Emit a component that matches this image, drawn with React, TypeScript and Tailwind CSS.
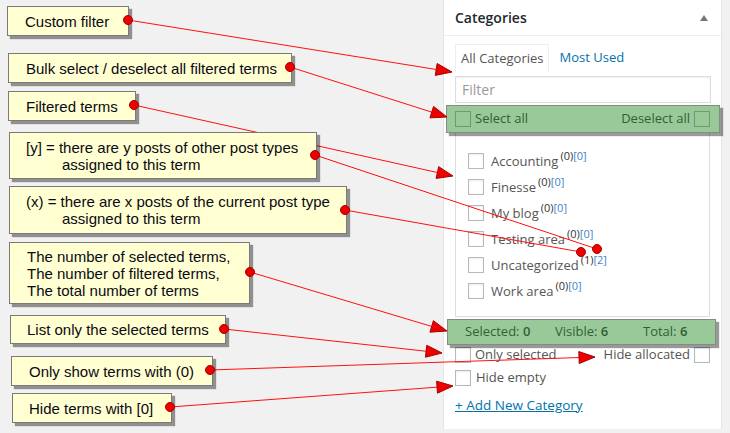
import React from 'react'

type Note = { mt: number; ml: number; w: number; h: number; pl: number; lines: string[]; indent?: boolean }

const notes: Note[] = [
  { mt: 6, ml: 7, w: 122, h: 30, pl: 17, lines: ['Custom filter'] },
  { mt: 17, ml: 8, w: 284, h: 30, pl: 17, lines: ['Bulk select / deselect all filtered terms'] },
  { mt: 8, ml: 8, w: 128, h: 30, pl: 17, lines: ['Filtered terms'] },
  { mt: 11, ml: 9, w: 308, h: 47, pl: 16, lines: ['[y] = there are y posts of other post types', 'assigned to this term'], indent: true },
  { mt: 7, ml: 9, w: 338, h: 48, pl: 16, lines: ['(x) = there are x posts of the current post type', 'assigned to this term'], indent: true },
  { mt: 8, ml: 9, w: 241, h: 62, pl: 17, lines: ['The number of selected terms,', 'The number of filtered terms,', 'The total number of terms'] },
  { mt: 11, ml: 10, w: 216, h: 29, pl: 16, lines: ['List only the selected terms'] },
  { mt: 12, ml: 11, w: 202, h: 30, pl: 17, lines: ['Only show terms with (0)'] },
  { mt: 7, ml: 12, w: 160, h: 30, pl: 16, lines: ['Hide terms with [0]'] },
]

const arrows = [
  { from: [128, 20], to: [452, 72], head: true },
  { from: [290, 67], to: [447, 117], head: true },
  { from: [134, 105], to: [453, 176], head: true },
  { from: [315, 155], to: [597, 249], head: false },
  { from: [345, 210], to: [581, 252], head: false },
  { from: [250, 272], to: [447, 331], head: true },
  { from: [224, 329], to: [442, 353], head: true },
  { from: [210, 370], to: [595, 357], head: true },
  { from: [170, 407], to: [453, 386], head: true },
]

const terms = [
  { name: 'Accounting', x: 0, y: 0 },
  { name: 'Finesse', x: 0, y: 0 },
  { name: 'My blog', x: 0, y: 0 },
  { name: 'Testing area', x: 0, y: 0 },
  { name: 'Uncategorized', x: 1, y: 2 },
  { name: 'Work area', x: 0, y: 0 },
]

function geom(a: (typeof arrows)[number]) {
  const [x1, y1] = a.from
  const [x2, y2] = a.to
  const len = Math.hypot(x2 - x1, y2 - y1)
  const ux = (x2 - x1) / len
  const uy = (y2 - y1) / len
  const bx = x2 - ux * 16
  const by = y2 - uy * 16
  return {
    end: a.head ? [bx, by] : [x2, y2],
    poly: `${x2},${y2} ${bx - uy * 6},${by + ux * 6} ${bx + uy * 6},${by - ux * 6}`,
  }
}

const Box = () => <span className="inline-block h-4 w-4 shrink-0 border border-[#b4b9be] bg-white shadow-[inset_0_1px_2px_rgba(0,0,0,0.08)]" />
const GreenBox = () => <span className="inline-block h-4 w-4 shrink-0 border border-[#6f9a6f]" />

export default function App() {
  return (
    <div className="relative flex h-[433px] w-[730px] overflow-hidden bg-[#f1f1f1]">
      {/* annotation boxes */}
      <div className="relative z-20 flex w-[443px] flex-col items-start font-['Liberation_Sans',Arial,sans-serif] text-[15px] text-[#0a0a14]">
        {notes.map((n, i) => (
          <div
            key={i}
            style={{ marginTop: n.mt, marginLeft: n.ml, width: n.w, height: n.h, paddingLeft: n.pl }}
            className="flex flex-col justify-center whitespace-nowrap border border-[#7a7a7a] bg-[#ffffd2] leading-[17px] shadow-[3px_3px_1px_rgba(0,0,0,0.4)]"
          >
            {n.lines.map((l, j) => (
              <span key={j} className={n.indent && j > 0 ? 'pl-[36px]' : ''}>
                {l}
              </span>
            ))}
          </div>
        ))}
      </div>

      {/* categories panel */}
      <div className="flex h-[429px] w-[279px] flex-col border-x border-[#e5e5e5] bg-white font-['Open_Sans',sans-serif] text-[13px] text-[#555]">
        <div className="flex h-[36px] shrink-0 items-center justify-between border-b border-[#eee] pl-[11px] pr-[12px]">
          <span className="text-[14px] font-semibold text-[#23282d]">Categories</span>
          <svg width="10" height="8" viewBox="0 0 10 8">
            <polygon points="5,1 9,7 1,7" fill="#72777c" />
          </svg>
        </div>

        <div className="flex flex-col pl-[11px]">
          <div className="mt-[8px] flex h-[28px] items-stretch">
            <span className="flex items-center border border-b-0 border-[#eee] px-[5px] text-[#555]">All Categories</span>
            <span className="ml-[10px] flex items-center text-[#0073aa]">Most Used</span>
          </div>

          <input
            placeholder="Filter"
            className="mt-[4px] h-[27px] w-[256px] border border-[#ddd] px-[6px] text-[14px] text-[#555] outline-none shadow-[inset_0_1px_2px_rgba(0,0,0,0.07)] placeholder:text-[#999]"
          />

          <div className="relative z-10 mt-[2px] ml-[-9px] flex h-[28px] w-[274px] items-center justify-between border border-[#7f8f7f] bg-[#99c999] pl-[8px] pr-[9px] text-[#335f33] shadow-[3px_3px_1px_rgba(0,0,0,0.4)]">
            <span className="flex items-center gap-[4px]">
              <GreenBox />
              Select all
            </span>
            <span className="flex items-center gap-[4px]">
              Deselect all
              <GreenBox />
            </span>
          </div>

          <div className="h-[184px] w-[255px] border border-t-0 border-[#ddd] pl-[12px] pt-[15px]">
            {terms.map((t) => (
              <div key={t.name} className="flex h-[26px] items-center gap-[7px]">
                <Box />
                <span className="leading-[18px]">
                  {t.name}
                  <span className="relative -top-[6px] ml-[2px] text-[11px] leading-none">
                    <span className="text-[#333]">({t.x})</span>
                    <span className="text-[#3b86c4]">[{t.y}]</span>
                  </span>
                </span>
              </div>
            ))}
          </div>

          <div className="relative z-10 mt-[2px] ml-[-8px] flex h-[26px] w-[269px] items-center border border-[#7f8f7f] bg-[#99c999] pl-[17px] text-[#335f33] shadow-[3px_3px_1px_rgba(0,0,0,0.4)]">
            <span className="w-[90px]">
              Selected: <b className="font-semibold">0</b>
            </span>
            <span className="w-[88px]">
              Visible: <b className="font-semibold">6</b>
            </span>
            <span>
              Total: <b className="font-semibold">6</b>
            </span>
          </div>

          <div className="mt-[1px] flex h-[17px] w-[255px] items-center justify-between">
            <span className="flex items-center gap-[4px]">
              <Box />
              Only selected
            </span>
            <span className="flex items-center gap-[4px]">
              Hide allocated
              <Box />
            </span>
          </div>

          <div className="mt-[6px] flex h-[17px] items-center gap-[5px]">
            <Box />
            Hide empty
          </div>

          <a className="mt-[9px] text-[13.5px] text-[#0073aa] underline">+ Add New Category</a>
        </div>
      </div>

      {/* connector lines */}
      <svg className="pointer-events-none absolute left-0 top-0 z-10" width="730" height="433">
        {arrows.map((a, i) => {
          const g = geom(a)
          return <line key={i} x1={a.from[0]} y1={a.from[1]} x2={g.end[0]} y2={g.end[1]} stroke="#ff1010" strokeWidth="1" />
        })}
      </svg>

      {/* dots and arrow heads */}
      <svg className="pointer-events-none absolute left-0 top-0 z-30" width="730" height="433">
        {arrows.map((a, i) => {
          const g = geom(a)
          return (
            <g key={i} fill="#ee0000" stroke="#a80000" strokeWidth="1">
              <circle cx={a.from[0]} cy={a.from[1]} r="4.5" />
              {a.head ? <polygon points={g.poly} /> : <circle cx={a.to[0]} cy={a.to[1]} r="4.5" />}
            </g>
          )
        })}
      </svg>
    </div>
  )
}
